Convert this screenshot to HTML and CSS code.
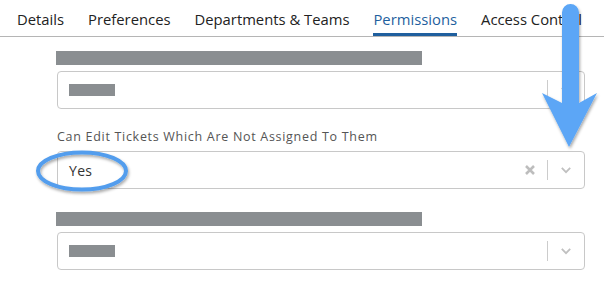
FILE: index.html
```html
<!DOCTYPE html>
<html lang="en">
<head>
    <meta charset="UTF-8">
    <meta name="viewport" content="width=device-width, initial-scale=1.0">
    <title>Permissions</title>
    <link rel="stylesheet" href="styles.css">
</head>
<body>
    <div class="page">
        <nav class="tabs">
            <a href="#">Details</a>
            <a href="#">Preferences</a>
            <a href="#">Departments &amp; Teams</a>
            <a href="#" class="active">Permissions</a>
            <a href="#">Access Control</a>
        </nav>

        <section class="permissions">
            <div class="field">
                <div class="label-blur"></div>
                <div class="select">
                    <div class="value"><span class="value-blur"></span></div>
                    <div class="indicators">
                        <span class="sep"></span>
                        <svg class="chevron" viewBox="0 0 20 20"><path d="M4 7l6 6 6-6" /></svg>
                    </div>
                </div>
            </div>

            <div class="field">
                <label class="label">Can Edit Tickets Which Are Not Assigned To Them</label>
                <div class="select">
                    <div class="value">Yes</div>
                    <div class="indicators">
                        <svg class="clear" viewBox="0 0 20 20"><path d="M5 5l10 10M15 5L5 15" /></svg>
                        <span class="sep"></span>
                        <svg class="chevron" viewBox="0 0 20 20"><path d="M4 7l6 6 6-6" /></svg>
                    </div>
                </div>
            </div>

            <div class="field">
                <div class="label-blur"></div>
                <div class="select">
                    <div class="value"><span class="value-blur"></span></div>
                    <div class="indicators">
                        <span class="sep"></span>
                        <svg class="chevron" viewBox="0 0 20 20"><path d="M4 7l6 6 6-6" /></svg>
                    </div>
                </div>
            </div>
        </section>

        <!-- annotation overlay -->
        <svg class="annotations" width="604" height="285" viewBox="0 0 604 285">
            <defs>
                <filter id="shadow" x="-20%" y="-20%" width="140%" height="140%">
                    <feDropShadow dx="1" dy="2" stdDeviation="1.5" flood-color="#000" flood-opacity="0.35" />
                </filter>
            </defs>
            <g filter="url(#shadow)">
                <path d="M570.5 4 a8.5 8.5 0 0 1 8.5 8.5 V103 L597 93 L569 147 L542 93 L562 103 V12.5 a8.5 8.5 0 0 1 8.5 -8.5 Z" fill="#5ba6f6" />
                <ellipse cx="82" cy="171" rx="44" ry="18.5" fill="none" stroke="#529ded" stroke-width="4" />
            </g>
        </svg>
    </div>
</body>
</html>
```

FILE: styles.css
```css
* {
    box-sizing: border-box;
}

body {
    margin: 0;
    background-color: #fff;
    font-family: 'Open Sans', sans-serif;
    color: #333;
}

.page {
    position: relative;
    width: 604px;
    height: 285px;
    overflow: hidden;
}

.tabs {
    display: flex;
    gap: 24px;
    height: 37px;
    padding-left: 17px;
    border-bottom: 1px solid #b5b5b5;
}

.tabs a {
    display: flex;
    align-items: center;
    height: 36px;
    padding-top: 5px;
    color: #222;
    text-decoration: none;
    font-size: 14.8px;
    white-space: nowrap;
    border-bottom: 3px solid transparent;
}

.tabs a.active {
    color: #1f5f9e;
    border-bottom-color: #1f5f9e;
}

.permissions {
    width: 585px;
    padding-left: 57px;
}

.field {
    display: flex;
    flex-direction: column;
}

.label-blur {
    width: 366px;
    height: 14px;
    margin: 14px 0 6px -1px;
    background-color: #8a8e91;
}

.label {
    margin: 19px 0 6px;
    font-size: 12.5px;
    letter-spacing: 0.7px;
    color: #555;
    line-height: 16px;
}

.field:nth-child(2) .label {
    margin-top: 20px;
}

.field:nth-child(3) .label-blur {
    margin-top: 23px;
}

.select {
    display: flex;
    align-items: center;
    height: 38px;
    border: 1px solid #c8c8c8;
    border-radius: 4px;
}

.value {
    flex: 1;
    display: flex;
    align-items: center;
    padding-left: 11px;
    font-size: 14px;
    letter-spacing: 0.3px;
    color: #333;
}

.value-blur {
    display: block;
    width: 46px;
    height: 12px;
    background-color: #8a8e91;
}

.indicators {
    display: flex;
    align-items: center;
    height: 100%;
}

.sep {
    width: 1px;
    height: 20px;
    margin: 0 8px 0 9px;
    background-color: #ccc;
}

.clear {
    width: 16px;
    height: 16px;
    fill: none;
    stroke: #bdbdbd;
    stroke-width: 3.2;
}

.chevron {
    width: 20px;
    height: 20px;
    margin-right: 8px;
    fill: none;
    stroke: #c0c0c0;
    stroke-width: 2.6;
    transform: scale(0.7);
}

.annotations {
    position: absolute;
    left: 0;
    top: 0;
    pointer-events: none;
}
```
